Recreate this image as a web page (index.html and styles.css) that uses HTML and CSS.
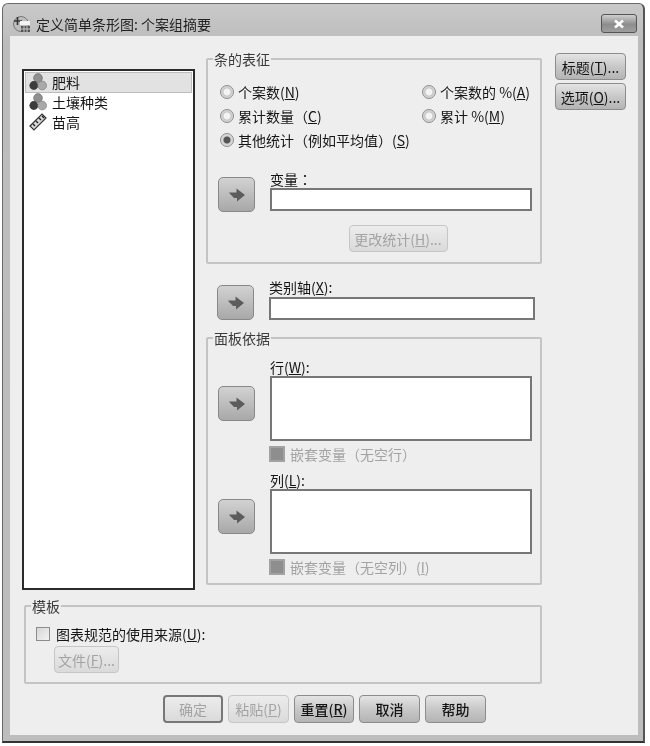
FILE: index.html
```html
<!DOCTYPE html>
<html lang="zh">
<head>
<meta charset="utf-8">
<title>定义简单条形图: 个案组摘要</title>
<link rel="stylesheet" href="styles.css">
</head>
<body>
<svg class="defs" width="0" height="0" aria-hidden="true">
  <defs>
    <symbol id="arrow" viewBox="0 0 18 16">
      <path d="M1 5.5 L8.5 5.5 L8.5 1.5 L17 8 L9 14.5 L9 11 L6 11 C5 9.5 3 8.5 1 5.5 Z" fill="#5c5c5c"/>
    </symbol>
    <symbol id="nominal" viewBox="0 0 18 18">
      <circle cx="9" cy="5" r="4.4" fill="#8f8f8f" stroke="#666" stroke-width=".6"/>
      <circle cx="4.8" cy="12.5" r="4.4" fill="#3c3c3c"/>
      <circle cx="13.2" cy="12.5" r="4.4" fill="#a9a9a9" stroke="#777" stroke-width=".6"/>
    </symbol>
    <symbol id="ruler" viewBox="0 0 18 18">
      <path d="M1 13 L13 1 L17 5 L5 17 Z" fill="#d8d8d8" stroke="#333" stroke-width="1.2"/>
      <path d="M4 11 L6 13 M7 8 L9 10 M10 5 L12 7 M13 3 L15 5" stroke="#222" stroke-width="1.4"/>
    </symbol>
  </defs>
</svg>
<div class="window">
  <header class="titlebar">
    <svg class="app-icon" viewBox="0 0 18 18" width="18" height="18" aria-hidden="true">
      <circle cx="8" cy="9" r="7.5" fill="#bdbdbd" stroke="#777"/>
      <path d="M1 6 H9 M4.5 2 V10" stroke="#333" stroke-width="1.6" fill="none"/>
      <rect x="7" y="6" width="10" height="4" fill="#f4f4f4"/>
      <rect x="8" y="11" width="9" height="6" fill="#555"/>
      <path d="M11 11 V17 M14 11 V17 M8 14 H17" stroke="#ddd" stroke-width=".8"/>
    </svg>
    <span class="title">定义简单条形图: 个案组摘要</span>
    <button class="close" type="button" aria-label="关闭">
      <svg viewBox="0 0 12 10" width="12" height="10" aria-hidden="true"><path d="M2 1.5 L10 8.5 M10 1.5 L2 8.5" stroke="#fff" stroke-width="2.6"/></svg>
    </button>
  </header>
  <div class="client">
    <div class="main">
      <ul class="varlist">
        <li class="var selected"><svg class="var-icon"><use href="#nominal"/></svg>肥料</li>
        <li class="var"><svg class="var-icon"><use href="#nominal"/></svg>土壤种类</li>
        <li class="var"><svg class="var-icon"><use href="#ruler"/></svg>苗高</li>
      </ul>
      <div class="center">
        <fieldset class="group group-bars">
          <legend>条的表征</legend>
          <div class="radios">
            <label class="radio"><i class="dot"></i>个案数(<u>N</u>)</label>
            <label class="radio"><i class="dot"></i>个案数的 %(<u>A</u>)</label>
            <label class="radio"><i class="dot"></i>累计数量（<u>C</u>)</label>
            <label class="radio"><i class="dot"></i>累计 %(<u>M</u>)</label>
            <label class="radio wide"><i class="dot on"></i>其他统计（例如平均值）(<u>S</u>)</label>
          </div>
          <div class="picker picker-var">
            <button class="arrow" type="button" aria-label="移入"><svg><use href="#arrow"/></svg></button>
            <div class="field">
              <div class="field-label">变量<span class="colon" lang="zh-Hant">：</span></div>
              <div class="input"></div>
            </div>
          </div>
          <div class="change-row"><button class="btn off change" type="button">更改统计(<u>H</u>)...</button></div>
        </fieldset>
        <div class="picker picker-cat">
          <button class="arrow" type="button" aria-label="移入"><svg><use href="#arrow"/></svg></button>
          <div class="field field-cat">
            <div class="field-label">类别轴(<u>X</u>):</div>
            <div class="input"></div>
          </div>
        </div>
        <fieldset class="group group-panel">
          <legend>面板依据</legend>
          <div class="picker picker-row">
            <button class="arrow" type="button" aria-label="移入"><svg><use href="#arrow"/></svg></button>
            <div class="field">
              <div class="field-label">行(<u>W</u>):</div>
              <div class="input tall"></div>
              <label class="nest"><i class="box-off"></i>嵌套变量（无空行）</label>
            </div>
          </div>
          <div class="picker picker-row second">
            <button class="arrow" type="button" aria-label="移入"><svg><use href="#arrow"/></svg></button>
            <div class="field">
              <div class="field-label">列(<u>L</u>):</div>
              <div class="input tall"></div>
              <label class="nest"><i class="box-off"></i>嵌套变量（无空列）(<u>I</u>)</label>
            </div>
          </div>
        </fieldset>
      </div>
      <div class="side">
        <button class="btn side-btn" type="button">标题(<u>T</u>)...</button>
        <button class="btn side-btn" type="button">选项(<u>O</u>)...</button>
      </div>
    </div>
    <fieldset class="group group-template">
      <legend>模板</legend>
      <label class="check"><i class="box"></i>图表规范的使用来源(<u>U</u>):</label>
      <button class="btn off file" type="button">文件(<u>F</u>)...</button>
    </fieldset>
    <div class="footer">
      <button class="btn off default w60" type="button">确定</button>
      <button class="btn off w61" type="button">粘贴(<u>P</u>)</button>
      <button class="btn w60 bold" type="button">重置(<u>R</u>)</button>
      <button class="btn w61 bold" type="button">取消</button>
      <button class="btn w61 bold" type="button">帮助</button>
    </div>
  </div>
</div>
</body>
</html>
```
FILE: styles.css
```css
* { box-sizing: border-box; }
html, body { margin: 0; padding: 0; background: #fff; }
body {
  width: 650px;
  height: 746px;
  overflow: hidden;
  padding: 3px 0 0 2px;
  font-family: "Noto Sans CJK SC", "Liberation Sans", sans-serif;
  font-size: 14px;
  line-height: 18px;
  color: #151515;
}
.defs { display: block; height: 0; }
.window {
  width: 643px;
  height: 740px;
  background: linear-gradient(#c9c9c9, #bcbcbc 40px, #bdbdbd);
  border: 1px solid #6a6a6a;
  border-bottom: 2px solid #333;
  border-right: 2px solid #555;
  border-radius: 6px 6px 0 0;
  padding: 0 6px 6px 7px;
  filter: blur(.55px);
}
.titlebar { height: 32px; display: flex; align-items: center; padding: 7px 0 0 3px; }
.app-icon { flex: none; }
.title { margin-left: 5px; flex: 1; color: #222; }
.close {
  width: 36px; height: 19px; margin-right: 0; padding: 0;
  border: 1px solid #555; border-radius: 3px;
  background: linear-gradient(#cfcfcf, #8d8d8d 55%, #9e9e9e);
  display: flex; align-items: center; justify-content: center;
}
.client { width: 628px; height: 699px; background: #eee; padding-left: 12px; }
.main { display: flex; align-items: flex-start; }
.varlist {
  list-style: none; margin: 33px 0 0; padding: 1px;
  width: 173px; height: 521px;
  background: #fff; border: 2px solid #2a2a2a;
}
.var { height: 20.5px; display: flex; align-items: center; padding: 0 0 2px 4px; }
.var.selected { background: #e2e2e2; border: 1px solid #bdbdbd; padding: 0 0 1px 3px; }
.var-icon { width: 18px; height: 18px; margin-right: 5px; flex: none; }
.center { width: 336px; margin-left: 11px; margin-top: 15px; }
.group {
  margin: 0; padding: 0; min-width: 0;
  border: 2px solid #c4c4c4; border-radius: 2px;
}
.group legend { margin-left: 5px; padding: 0 1px; height: 16px; line-height: 16px; color: #3a3a3a; }
.group-bars { height: 213px; }
.radios {
  display: grid; grid-template-columns: 202px 1fr;
  grid-auto-rows: 24px; padding: 13px 0 0 12px;
}
.radio { display: flex; align-items: center; white-space: nowrap; }
.radio.wide { grid-column: 1 / 3; }
.dot {
  width: 14px; height: 14px; border-radius: 50%; flex: none; margin-right: 4px;
  border: 1px solid #8a8a8a;
  background: radial-gradient(circle, #f4f4f4 0 3px, #c4c4c4 4px, #dedede 6px);
}
.dot.on { background: radial-gradient(circle, #555 0 3px, #cfcfcf 4px, #dedede 6px); }
.picker { display: flex; align-items: flex-start; }
.arrow {
  width: 37px; height: 35px; padding: 0; flex: none;
  border: 1px solid #888; border-radius: 5px;
  background: linear-gradient(#d2d2d2, #a8a8a8);
  display: flex; align-items: center; justify-content: center;
}
.arrow svg { width: 18px; height: 16px; }
.picker-var { margin: 18px 0 0 10px; }
.picker-var .arrow { margin-top: 7px; }
.field { margin-left: 15px; width: 262px; }
.field-label { height: 18px; line-height: 18px; }
.colon { font-family: "Noto Sans CJK TC", sans-serif; }
.input { height: 23px; background: #fff; border: 2px solid #777; }
.input.tall { height: 65px; }
.change-row { display: flex; justify-content: center; margin-top: 13px; padding-left: 65px; }
.change-row .change { margin-right: 17px; }
.btn {
  font: inherit; color: #151515; padding: 0; white-space: nowrap;
  height: 27px; border: 1px solid #8c8c8c; border-radius: 4px;
  background: linear-gradient(#e4e4e4, #c8c8c8 50%, #b4b4b4);
}
.btn.off { color: #a3a3a3; border-color: #c6c6c6; background: linear-gradient(#ececec, #dadada); }
.change { width: 99px; }
.picker-cat { margin: 14px 0 0 11px; }
.picker-cat .arrow { margin-top: 7px; }
.field-cat { width: 266px; margin-left: 15px; }
.field-cat .input { margin-top: 1px; }
.group-panel { margin-top: 10px; height: 255px; }
.group-panel .picker-row { margin: 12px 0 0 10px; }
.picker-row .arrow { margin-top: 28px; }
.group-panel .picker-row.second { margin-top: 9px; }
.nest { display: flex; align-items: center; margin: 4px 0 0 -1px; height: 17px; color: #a3a3a3; white-space: nowrap; }
.box-off {
  width: 16px; height: 16px; flex: none; margin-right: 5px;
  background: #8e8e8e; border: 2px solid #a2a2a2;
}
.side { display: flex; flex-direction: column; gap: 3px; margin: 17px 0 0 13px; }
.side-btn { width: 71px; height: 27px; }
.group-template { width: 518px; height: 86px; margin: 8px 0 0 2px; padding: 11px 0 0 10px; }
.group-template legend { margin-left: -5px; }
.check { display: flex; align-items: center; height: 18px; }
.box {
  width: 14px; height: 14px; flex: none; margin-right: 6px;
  border: 1px solid #8c8c8c; background: linear-gradient(135deg, #d6d6d6, #f2f2f2);
}
.file { display: block; width: 65px; margin: 3px 0 0 18px; }
.footer { display: flex; gap: 5px; padding-left: 141px; margin-top: 11px; }
.footer .btn { height: 28px; }
.w60 { width: 60px; }
.w61 { width: 61px; }
.btn.default { border: 2px solid #777; }
.bold { font-weight: 500; }
```
